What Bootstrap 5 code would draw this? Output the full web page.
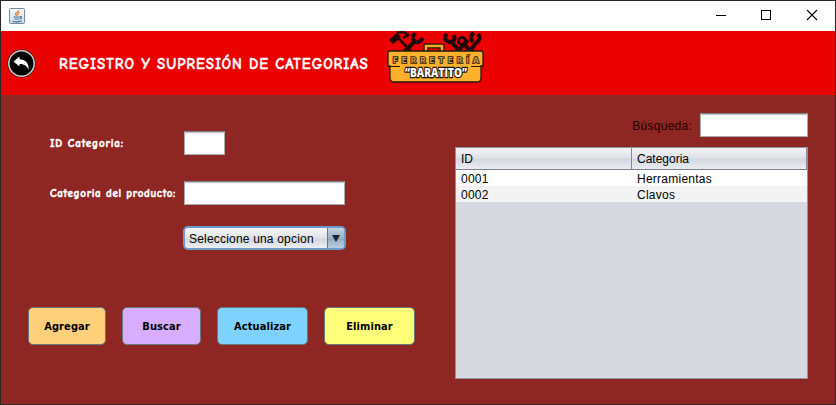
<!DOCTYPE html>
<html lang="es">
<head>
<meta charset="utf-8">
<meta name="viewport" content="width=device-width, initial-scale=1">
<title>Registro y supresión de categorías</title>
<link href="https://cdn.jsdelivr.net/npm/bootstrap@5.3.0/dist/css/bootstrap.min.css" rel="stylesheet">
<style>
body{font-family:"Liberation Sans",Arial,sans-serif;font-size:12px;line-height:16px;color:#000;overflow:hidden}
svg{display:block;flex:none}
.win{width:836px;height:405px;border:1px solid #2a2729;background:#8e2623}
.titlebar{height:30px;padding-left:8px;background:#fff}
.banner{height:64px;background:#eb0000;padding-left:6px}
.banner h1{font:700 15px/20px "Comic Sans MS","Comic Neue",Lato,sans-serif;color:#fff;width:328px;margin:1px 0 0 23px;white-space:nowrap;letter-spacing:.91px;-webkit-text-stroke:.4px #fff}
.left-pane{width:454px;padding:36px 0 0 27px}
.lbl{font:700 11px/14px "Comic Sans MS","Comic Neue",Lato,sans-serif;color:#fff;width:134px;margin:2px 0 0 22px;white-space:nowrap;-webkit-text-stroke:.5px #fff}
.lbl-id{letter-spacing:.85px}
.lbl-cat{letter-spacing:.67px}
.field{height:24px;border:1px solid #a9adb0;border-top-color:#7f8489;border-radius:0;padding:0 4px;background:#fff;box-shadow:inset 0 2px 1px -1px #b8bbc0;font-size:12px}
.f-id{width:41px}.f-cat{width:161px}
.field-row{height:24px;margin-bottom:26px}
.combo{width:163px;height:24px;margin:-5px 0 0 155px;border:2px solid #6c9bc9;border-radius:5px;background:linear-gradient(#f7f7f9,#dfe1e6 50%,#d3d6dd 55%,#eceef3);overflow:hidden}
.combo-text{padding:1px 0 0 4px;letter-spacing:.19px}
.combo-arrow{width:17px;border-left:1px solid #62768c;background:linear-gradient(#c4d2df,#9bb1c5 50%,#91a9c0 52%,#bad0e2)}
.actions{margin-top:57px;gap:16px}
.act{height:38px;padding:2px 0 0;border:1px solid #68777c;border-radius:5px;font:700 11px/16px Tahoma,"DejaVu Sans Condensed","DejaVu Sans",sans-serif;letter-spacing:.1px;color:#000}
.b1{width:78px;background:#ffd07c}.b2{width:79px;background:#d7adff}.b3{width:91px;background:#7dd2ff}.b4{width:91px;background:#ffff79}
.right-pane{width:353px;padding-top:18px}
.search{width:108px}
.search-lbl{color:#260000;margin:2px 8px 0 0;letter-spacing:.25px}
.grid-box{width:353px;height:232px;margin-top:10px;border:1px solid #8f959e;background:#d6d9e0}
.grid-box table{width:351px;table-layout:fixed;border-collapse:separate;border-spacing:0}
.grid-box th{height:22px;padding:0 5px;line-height:16px;font-weight:400;border-right:1px solid #858a93;border-bottom:1px solid #7c8087;background:linear-gradient(#f4f4f6,#dfe1e6 48%,#d4d7dd 52%,#e9ecf2)}
.grid-box td{height:16px;padding:2px 5px 0;line-height:14px;background:#fff;letter-spacing:.25px}
.grid-box tr.alt td{background:#f2f2f2}
.c1{width:176px}
</style>
</head>
<body>
<div class="win">
<header class="titlebar d-flex align-items-center">
<svg width="16" height="16" viewBox="0 0 16 16"><defs><linearGradient id="jg" x2="0" y2="1"><stop stop-color="#fdfdfd"/><stop offset="1" stop-color="#cbd8e3"/></linearGradient></defs><rect x=".5" y=".5" width="15" height="15" rx="1" fill="url(#jg)" stroke="#738ba2"/><path d="M9.700 2.200C10 4 6.300 4.500 6.600 6.200C6.700 7 7.500 7.400 7.800 8M10.500 4.500C8.500 5.200 8.500 6 9 7.200" fill="none" stroke="#e8792b" stroke-width="1.300"/><path d="M4.500 9H11M11 8.700C13.300 8.300 13 10.300 10.800 11M5.500 11H10M3.500 13.200C6 14 10 13.800 12.500 12.900" fill="none" stroke="#4a7596" stroke-width="1.200"/></svg>
<div class="controls d-flex ms-auto">
<svg width="45" height="30"><path d="M16 14.500H26" stroke="#000"/></svg>
<svg width="45" height="30"><rect x="16.500" y="9.500" width="9" height="9" fill="none" stroke="#000"/></svg>
<svg width="45" height="30"><path d="M17 9L27 19M27 9L17 19" stroke="#000" stroke-width="1.100"/></svg>
</div>
</header>
<div class="banner d-flex align-items-center">
<svg width="29" height="29" viewBox="0 0 29 29"><circle cx="14.500" cy="14.500" r="14" fill="#26100f"/><circle cx="14.500" cy="14.500" r="12.700" fill="#000" stroke="#ccc" stroke-width="1.500"/><path d="M6.500 12.500L12.500 7.500V10.300C18 10.500 21.700 13.500 21.700 20.800C19.500 16.500 17 15 12.500 15V17.500Z" fill="#fff"/></svg>
<h1>REGISTRO Y SUPRESIÓN DE CATEGORIAS</h1>
<svg class="align-self-start" width="98" height="54" viewBox="0 0 98 54">
<g fill="none" stroke="#210808"><path d="M10 6L24 20" stroke-width="2.500"/><path d="M4 11L12 4" stroke-width="6"/><path d="M10 2Q16 -1 21 4L16 7" stroke-width="2.500"/><path d="M17 21L28 10" stroke-width="4"/><path d="M28 2Q23 8 29 11Q33 12 36 7" stroke-width="4"/><path d="M60 3Q55 8 62 11Q69 11 67 4M64 10L72 20M71 20L81 9" stroke-width="4"/><circle cx="75" cy="10" r="3.500" stroke-width="3"/><path d="M77 13L83 20M83 20L89 12M86 11Q81 6 87 2M91 3Q95 8 89 12" stroke-width="4"/></g>
<path d="M39 21V15H55V21" fill="none" stroke="#211607" stroke-width="5"/><path d="M39 21V15H55V21" fill="none" stroke="#ffad2e" stroke-width="2.600"/>
<path d="M3 20H94Q96 20 96 22V35H94V47Q94 51 90 51H7Q3 51 3 47V35H1V22Q1 20 3 20Z" fill="#ffb02d" stroke="#241908" stroke-width="1.300"/><path d="M1 35.500H13M84 35.500H96" stroke="#241908" stroke-width="1.200"/>
<text x="6" y="31.500" font-family="Inter,sans-serif" font-size="8" font-weight="800" textLength="86" fill="#c69243" stroke="#2a2015" stroke-width="1.700" paint-order="stroke">FERRETERÍA</text>
<text x="18" y="46" font-family="Open Sans,sans-serif" font-size="13" font-weight="800" textLength="62" lengthAdjust="spacingAndGlyphs" fill="#fff" stroke="#24170b" stroke-width="2.500" paint-order="stroke">“BARATITO”</text>
</svg>
</div>
<main class="d-flex">
<section class="left-pane">
<div class="field-row d-flex align-items-center"><label class="lbl lbl-id" for="cid">ID Categoria:</label><input id="cid" class="field f-id form-control"></div>
<div class="field-row d-flex align-items-center"><label class="lbl lbl-cat" for="cp">Categoria del producto:</label><input id="cp" class="field f-cat form-control"></div>
<div class="combo d-flex align-items-stretch" role="combobox"><span class="combo-text d-flex align-items-center flex-grow-1">Seleccione una opcion</span><span class="combo-arrow d-flex align-items-center justify-content-center"><svg width="8" height="7"><path d="M0 0H8L4 7Z" fill="#1e2730"/></svg></span></div>
<div class="actions d-flex"><button class="btn act b1">Agregar</button><button class="btn act b2">Buscar</button><button class="btn act b3">Actualizar</button><button class="btn act b4">Eliminar</button></div>
</section>
<section class="right-pane">
<div class="d-flex justify-content-end align-items-center"><label class="search-lbl" for="q">Búsqueda:</label><input id="q" class="field search form-control"></div>
<div class="grid-box"><table><thead><tr><th class="c1">ID</th><th>Categoria</th></tr></thead><tbody><tr><td>0001</td><td>Herramientas</td></tr><tr class="alt"><td>0002</td><td>Clavos</td></tr></tbody></table></div>
</section>
</main>
</div>
<script src="https://cdn.jsdelivr.net/npm/bootstrap@5.3.0/dist/js/bootstrap.bundle.min.js"></script>
</body>
</html>
